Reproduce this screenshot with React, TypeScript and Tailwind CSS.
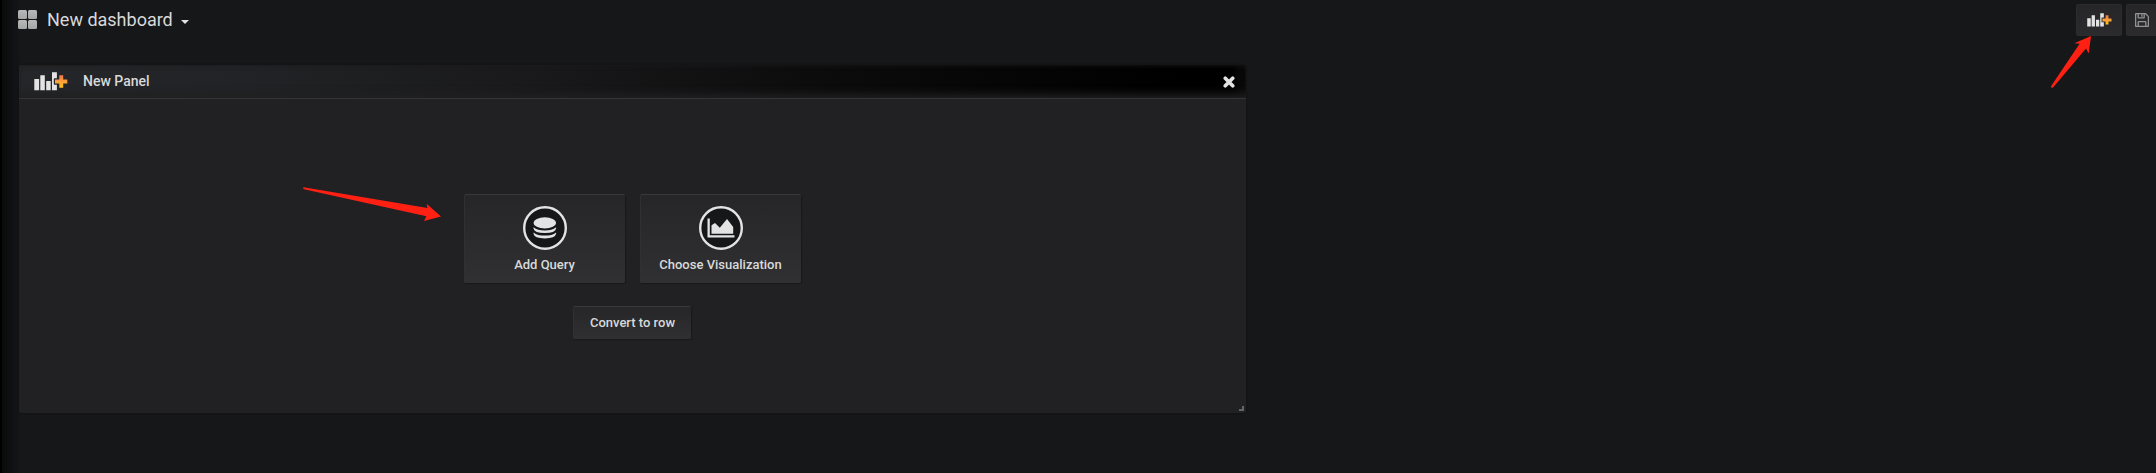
import React from 'react';

function AddPanelIcon({ className }: { className: string }) {
  return (
    <svg className={className} viewBox="0 0 34 19" aria-hidden="true">
      <defs>
        <linearGradient id="plus" x1="0" y1="0" x2="0" y2="1">
          <stop offset="0" stopColor="#f2734c" />
          <stop offset="0.5" stopColor="#fba139" />
          <stop offset="1" stopColor="#fbc01a" />
        </linearGradient>
      </defs>
      <g fill="#e3e3e3">
        <path d="M.3 7h4.8v11.2H.3zM6.3 3.2h4.5v15H6.3zM12.2 9h4.5v9.2h-4.5z" />
        <path d="M18 .2h4.9v6h-2.400q-.7 0-.7.7v5.100q0 .7.700.7h2.400v5.500H18z" />
      </g>
      <path fill="url(#plus)" d="M25.300 3.200h3.900v4.300h4.100v3.900h-4.100v4.300h-3.900v-4.300h-4.300V7.500h4.300z" />
    </svg>
  );
}

function GridIcon() {
  return (
    <span className="grid h-[19px] w-[19px] grid-cols-2 gap-px">
      {[0, 1, 2, 3].map((i) => (
        <span key={i} className="rounded-[1.5px] bg-gradient-to-b from-[#b9b9b9] to-[#a5a5a5]" />
      ))}
    </span>
  );
}

function SaveIcon() {
  return (
    <svg className="h-[14px] w-[14px]" viewBox="0 0 14 14" fill="none" stroke="#919396" strokeWidth="1.3" aria-hidden="true">
      <path d="M.6 1.300q0-.7.700-.7h8.700q.5 0 .9.400l2.100 2.100q.4.400.4.900v8.700q0 .7-.7.700H1.300q-.7 0-.7-.7z" />
      <path d="M3.200.700v3.700q0 .5.500.500h5q.5 0 .5-.5V.700M3.200 13.300V9.200q0-.5.500-.5h6.600q.5 0 .5.5v4.100M6.900 1.300v2.400" />
    </svg>
  );
}

function CardIcon({ children }: { children: React.ReactNode }) {
  return (
    <svg className="h-11 w-11 shrink-0" viewBox="0 0 44 44" aria-hidden="true">
      <circle cx="22" cy="22" r="20.800" fill="#161719" stroke="#e3e3e3" strokeWidth="2.400" />
      <g fill="#e3e3e3">{children}</g>
    </svg>
  );
}

function ChartGlyph() {
  return (
    <g transform="translate(8.500 12)">
      <path d="M0 .5h2.300v16.700H27v2.300H0z" />
      <path d="M4 15.800V7.200L7.500 5l4.800 4.800L19.500 1l6.200 8v6.800z" />
    </g>
  );
}

function DatabaseGlyph() {
  return (
    <g transform="translate(10.300 11)">
      <ellipse cx="11.500" cy="5.900" rx="11.300" ry="5.600" />
      <path d="M.2 10.200q4 3.200 11.300 3.200t11.300-3.200v1.200q-.8 4.500-11.300 4.500T.2 11.400z" />
      <path d="M.2 15.400q4 3.200 11.300 3.200t11.300-3.200v1.400q-.8 4.600-11.300 4.600T.2 16.800z" />
    </g>
  );
}

function ActionCard({ label, children }: { label: string; children: React.ReactNode }) {
  return (
    <button className="flex h-[89px] w-[161px] flex-col items-center rounded-[2px] border-l border-t border-l-[#303032] border-t-[#39393b] bg-gradient-to-b from-[#262628] to-[#303032] pt-[11px] shadow-[1px_1px_1px_#18191b]">
      <CardIcon>{children}</CardIcon>
      <span className="mt-[5px] text-[13px] font-medium leading-5">{label}</span>
    </button>
  );
}

export default function App() {
  return (
    <div className="relative h-[473px] w-full overflow-hidden border-l-2 border-black bg-[#161719] bg-[linear-gradient(90deg,#0a0a0b_0px,#161719_20px)] font-['Roboto',sans-serif] text-[#d8d9da]">
      <header className="flex h-[65px] items-start justify-between pl-4">
        <div className="flex items-center pt-[5px]">
          <GridIcon />
          <h1 className="ml-[10px] text-[18px] font-normal leading-[29px]">New dashboard</h1>
          <svg className="ml-2 mt-[5px] h-1 w-2" viewBox="0 0 8 4" aria-hidden="true"><path d="M0 0h8L4 4z" fill="#e3e3e3" /></svg>
        </div>
        <div className="flex gap-1 pt-1">
          <button className="flex h-8 w-[46px] items-center justify-center rounded-[2px] border border-[#2c2c2e] bg-gradient-to-b from-[#262628] to-[#2b2b2d]">
            <AddPanelIcon className="h-[14px] w-[25px]" />
          </button>
          <button className="flex h-8 w-[30px] items-center rounded-l-[2px] border border-r-0 border-[#2c2c2e] bg-gradient-to-b from-[#262628] to-[#2b2b2d] pl-2">
            <SaveIcon />
          </button>
        </div>
      </header>

      <section className="relative ml-[17px] flex h-[348px] w-[1227px] flex-col rounded-[3px] bg-[#212124] shadow-[0_0_2px_#111214]">
        <div className="flex h-[34px] items-center border-b border-[#353538] bg-[linear-gradient(90deg,#252629_0px,#222326_220px,#19191b_520px,#0b0b0b_820px,#000_1160px,#000_1212px,#0b0b0c_1227px)] pl-[15px] pr-[11px] shadow-[inset_0_-10px_9px_-6px_#202022,inset_0_3px_5px_-3px_#1b1b1d]">
          <AddPanelIcon className="h-[19px] w-[34px]" />
          <span className="ml-[15px] mb-px text-sm font-medium leading-5">New Panel</span>
          <svg className="ml-auto mt-px h-3 w-3" viewBox="0 0 12 12" aria-hidden="true">
            <path d="M2.300 2.300l7.400 7.400M9.700 2.300L2.300 9.700" stroke="#e3e3e3" strokeWidth="3.700" strokeLinecap="round" />
          </svg>
        </div>
        <div className="flex flex-col items-center pt-[95px] pr-[1px]">
          <div className="flex gap-[15px]">
            <ActionCard label="Add Query"><DatabaseGlyph /></ActionCard>
            <ActionCard label="Choose Visualization"><ChartGlyph /></ActionCard>
          </div>
          <button className="mt-[23px] h-[33px] w-[118px] rounded-[2px] border-l border-t border-l-[#303032] border-t-[#39393b] bg-gradient-to-b from-[#262628] to-[#303032] text-[13px] font-medium shadow-[1px_1px_1px_#18191b]">
            Convert to row
          </button>
        </div>
        <svg className="absolute bottom-[2px] right-[2px] h-[5px] w-[5px]" viewBox="0 0 5 5" aria-hidden="true"><path d="M3 0h2v5H0V3h3z" fill="#656567" /></svg>
      </section>

      <svg className="absolute left-[301px] top-[187px] h-[35px] w-[141px]" viewBox="0 0 141 35" fill="#ff2014" aria-hidden="true">
        <path d="M0 .8Q.8.100 2 .5L124.500 21l-.9-4.200L138 29.600 121 34l2.400-4.700L1 2.300Q0 1.800 0 .8z" />
      </svg>
      <svg className="absolute left-[2049px] top-[36px] h-[53px] w-[41px]" viewBox="0 0 41 53" fill="#ff2014" aria-hidden="true">
        <path d="M40 0L37.700 17.600l-2.700-5L2.500 51.100Q1.300 52.400.400 51.500t.3-2.200L28.600 7.800l-5.300-.5z" />
      </svg>
    </div>
  );
}
